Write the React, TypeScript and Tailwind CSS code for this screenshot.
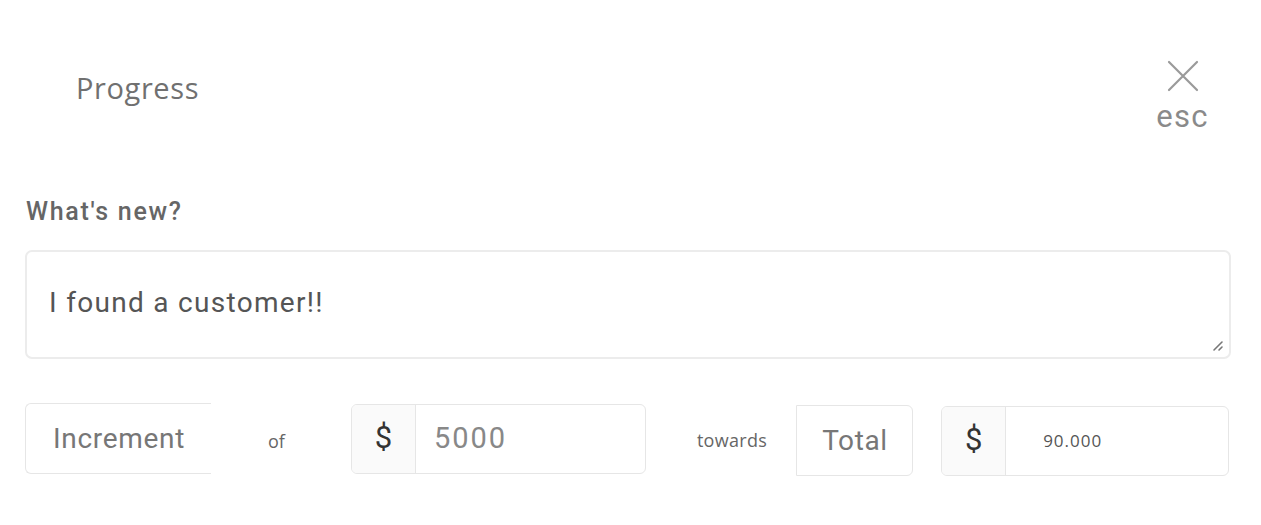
import React from 'react'

const CloseIcon: React.FC = () => (
  <svg width="32" height="32" viewBox="0 0 32 32" fill="none" stroke="#9a9a9a" strokeWidth="2.2" strokeLinecap="round">
    <path d="M2 2 L30 30 M30 2 L2 30" />
  </svg>
)

const DollarGroup: React.FC<{ value: string; valueClass: string; width: string }> = ({ value, valueClass, width }) => (
  <div className={`flex h-[70px] ${width} rounded-[6px] border border-[#e6e6e6] overflow-hidden`}>
    <div className="w-[64px] shrink-0 bg-[#fafafa] border-r border-[#e6e6e6] flex items-center justify-center text-[31px] text-[#333] font-['Roboto',sans-serif]">
      $
    </div>
    <div className={`flex items-center ${valueClass}`}>{value}</div>
  </div>
)

export default function App() {
  return (
    <div className="w-[1261px] h-[525px] bg-white relative">
      <div className="flex justify-between pt-[60px]">
        <h1 className="ml-[76px] mt-[4px] text-[29px] leading-[48px] tracking-[0.6px] text-[#707070] font-['Open_Sans',sans-serif]">
          Progress
        </h1>
        <button className="mr-[52px] flex flex-col items-center text-[#8a8a8a]">
          <CloseIcon />
          <span className="text-[31px] leading-[40px] tracking-[1.4px] font-['Roboto',sans-serif] mt-[5px]">esc</span>
        </button>
      </div>

      <div className="px-[25px] mt-[60px]">
        <label className="block text-[25px] leading-[30px] tracking-[1.7px] font-medium text-[#666] font-['Roboto',sans-serif] pl-[1px]">
          What's new?
        </label>
        <div className="relative mt-[23px] h-[109px] w-[1206px] rounded-[7px] border-2 border-[#ececec] flex items-center pl-[22px]">
          <span className="text-[28px] tracking-[1.3px] text-[#555] font-['Roboto',sans-serif] -mt-[4px]">I found a customer!!</span>
          <svg className="absolute right-[5px] bottom-[5px]" width="12" height="12" viewBox="0 0 12 12" stroke="#777" strokeWidth="1.6" strokeLinecap="round">
            <path d="M2 10 L10 2 M7 10 L10 7" />
          </svg>
        </div>

        <div className="flex items-center mt-[42px]">
          <div className="w-[186px] h-[71px] border border-[#e6e6e6] border-r-0 rounded-l-[6px] flex items-center pl-[27px] text-[28px] tracking-[0.7px] text-[#777] font-['Roboto',sans-serif]">
            Increment
          </div>
          <span className="ml-[57px] mt-[6px] text-[18px] text-[#666] font-['Open_Sans',sans-serif]">of</span>
          <div className="ml-[66px]">
            <DollarGroup
              value="5000"
              width="w-[295px]"
              valueClass="pl-[18px] text-[29px] tracking-[2px] text-[#888] font-['Roboto',sans-serif]"
            />
          </div>
          <span className="ml-[51px] mt-[4px] text-[18px] tracking-[0.3px] text-[#666] font-['Open_Sans',sans-serif]">towards</span>
          <div className="ml-[29px] mt-[4px] w-[117px] h-[71px] border border-[#e6e6e6] rounded-r-[6px] flex items-center pl-[25px] text-[28px] tracking-[0.6px] text-[#777] font-['Roboto',sans-serif]">
            Total
          </div>
          <div className="ml-[28px] mt-[4px]">
            <DollarGroup
              value="90.000"
              width="w-[288px]"
              valueClass="pl-[37px] text-[17px] tracking-[1px] text-[#555] font-['Open_Sans',sans-serif]"
            />
          </div>
        </div>
      </div>
    </div>
  )
}
